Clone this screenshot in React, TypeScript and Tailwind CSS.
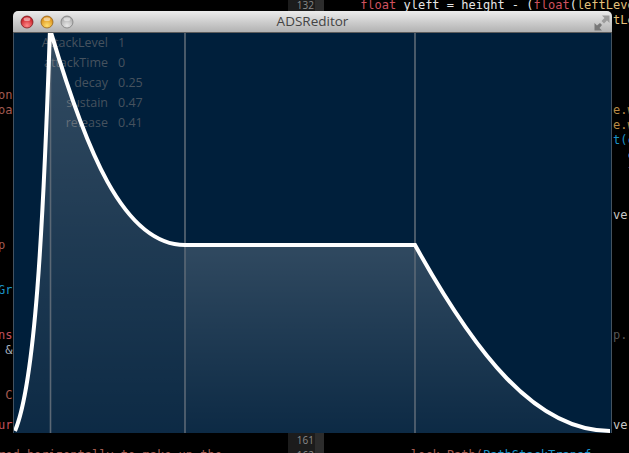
import React from "react";

const ui = "font-['Open_Sans',sans-serif]";
const LINES = 31;

type Line = { k: number; node: React.ReactNode };

const leftCode: Line[] = [
  { k: 6, node: <span className="text-[#a35a50]">on</span> },
  { k: 7, node: <span className="text-[#a35a50]">oa</span> },
  { k: 16, node: <span className="text-[#a35a50]">p</span> },
  { k: 19, node: <span className="text-[#1b93c8]">Gr</span> },
  { k: 22, node: <span className="text-[#c0505c]">ns</span> },
  { k: 23, node: <span className="text-[#a8b4c0]"> &amp;</span> },
  { k: 26, node: <span className="text-[#a35a50]"> C</span> },
  { k: 28, node: <span className="text-[#c0505c]">ur</span> },
  { k: 30, node: <span className="text-[#a35a50]">red horizontally to make up the</span> },
];

const pad = " ".repeat(40);
const rightCode: Line[] = [
  {
    k: 0,
    node: (
      <span className="text-[#e6e6e6]">
        {"     "}
        <span className="text-[#d0525f]">float</span> yleft = height - (<span className="text-[#d0525f]">float</span>(
        <span className="text-[#e5c07b]">leftLeve</span>
      </span>
    ),
  },
  { k: 1, node: <span className="text-[#e5c07b]">{pad}tLe</span> },
  { k: 7, node: <span className="text-[#b98a45]">{pad}e.w</span> },
  { k: 8, node: <span className="text-[#b98a45]">{pad}e.w</span> },
  { k: 9, node: <span className="text-[#1b93c8]">{pad}t(c</span> },
  { k: 10, node: <span className="text-[#d0d0d0]">{pad}  c</span> },
  { k: 11, node: <span className="text-[#d0525f]">{pad}  f</span> },
  { k: 14, node: <span className="text-[#c8c8c8]">{pad}ve,</span> },
  { k: 22, node: <span className="text-[#555555]">{pad}p.</span> },
  { k: 28, node: <span className="text-[#c8c8c8]">{pad}ve,</span> },
  {
    k: 30,
    node: (
      <span className="text-[#a35a50]">
        {" ".repeat(12)}lock Path(<span className="text-[#1b93c8]">PathStackTransf</span>
      </span>
    ),
  },
];

function CodePane({ lines, className }: { lines: Line[]; className: string }) {
  return (
    <div className={`flex flex-col overflow-hidden font-['DejaVu_Sans_Mono',monospace] text-[12px] leading-[15px] whitespace-pre ${className}`}>
      {Array.from({ length: LINES }, (_, i) => (
        <div key={i} className="h-[15px] shrink-0">
          {lines.find((l) => l.k === i)?.node}
        </div>
      ))}
    </div>
  );
}

function Light({ from, to, edge }: { from: string; to: string; edge: string }) {
  return (
    <svg width="14" height="14" viewBox="0 0 14 14" className="block">
      <defs>
        <radialGradient id={`l${edge}`} cx="50%" cy="80%" r="70%">
          <stop offset="0%" stopColor={to} />
          <stop offset="100%" stopColor={from} />
        </radialGradient>
      </defs>
      <circle cx="7" cy="7" r="6" fill={`url(#l${edge})`} stroke={edge} strokeWidth="0.8" />
      <ellipse cx="7" cy="4.2" rx="3.4" ry="1.9" fill="#ffffff" opacity="0.5" />
    </svg>
  );
}

const params: [string, string][] = [
  ["AttackLevel", "1"],
  ["attackTime", "0"],
  ["decay", "0.25"],
  ["sustain", "0.47"],
  ["release", "0.41"],
];

const CURVE =
  "M2 398 C 22 350, 30 200, 37 -4 C 72 115, 110 212, 172 212 L 402 212 C 462 320, 522 398, 597 398";

export default function App() {
  return (
    <div className="relative w-[629px] h-[453px] bg-black overflow-hidden">
      {/* code editor behind the window */}
      <div className="flex h-full">
        <CodePane lines={leftCode} className="w-[288px] shrink-0 -mt-[2px] -ml-[2px]" />
        <div className="w-[36px] ml-[2px] shrink-0 flex overflow-hidden">
          <div className={`w-[27px] bg-[#1c1c1c] flex flex-col items-end pr-[1px] ${ui} text-[10px] leading-[15px] text-[#8a8a8a]`}>
            <div className="-mt-[2px] flex flex-col">
              {Array.from({ length: LINES }, (_, i) => (
                <span key={i} className="h-[15px] shrink-0">
                  {132 + i}
                </span>
              ))}
            </div>
          </div>
          <div className="w-[9px] bg-[#2c2c2c]" />
        </div>
        <CodePane lines={rightCode} className="flex-1 -mt-[2px]" />
      </div>

      {/* window */}
      <div className="absolute left-[13px] top-[11px] w-[599px] h-[422px] flex flex-col">
        <div className="h-[22px] shrink-0 rounded-t-[5px] bg-gradient-to-b from-[#ececec] to-[#b2b2b2] border-b border-[#5c5c5c] grid grid-cols-[1fr_auto_1fr] items-center px-[2px]">
          <div className="flex gap-[6px] ml-[5px]">
            <Light from="#c4141c" to="#ff8a8a" edge="#7c1a1e" />
            <Light from="#d98a10" to="#ffdf70" edge="#94651a" />
            <Light from="#a8a8a8" to="#e8e8e8" edge="#7e7e7e" />
          </div>
          <span className={`${ui} text-[13.5px] leading-none text-[#444444]`}>ADSReditor</span>
          <svg width="16" height="16" viewBox="0 0 16 16" className="justify-self-end mt-[2px]">
            <path d="M15.5 0.5 L8 0.5 L10.5 3 L7.5 6 L10 8.5 L13 5.5 L15.5 8 Z" fill="#9c9c9c" />
            <path d="M0.5 15.5 L8 15.5 L5.5 13 L8 10 L6 8 L3 10.5 L0.5 8 Z" fill="#787878" />
          </svg>
        </div>

        <div className="relative flex-1 bg-[#001f3b] border-x border-[#44525f]">
          <div className={`grid grid-cols-[auto_auto] justify-start gap-x-[10px] pl-[20px] ${ui} text-[12.5px] leading-[20px] text-[#46525e]`}>
            {params.map(([k, v]) => (
              <React.Fragment key={k}>
                <span className="text-right w-[74px]">{k}</span>
                <span>{v}</span>
              </React.Fragment>
            ))}
          </div>

          <svg width="597" height="400" viewBox="1 0 597 400" className="absolute left-0 top-0 block">
            <defs>
              <linearGradient id="g1" gradientUnits="userSpaceOnUse" x1="0" y1="0" x2="0" y2="400">
                <stop offset="0%" stopColor="#ffffff" stopOpacity="0.2" />
                <stop offset="100%" stopColor="#ffffff" stopOpacity="0.05" />
              </linearGradient>
              <linearGradient id="g2" gradientUnits="userSpaceOnUse" x1="0" y1="212" x2="0" y2="400">
                <stop offset="0%" stopColor="#ffffff" stopOpacity="0.19" />
                <stop offset="100%" stopColor="#ffffff" stopOpacity="0.05" />
              </linearGradient>
            </defs>
            <path d="M2 398 C 22 350, 30 200, 37 -4 L 37 400 L 2 400 Z" fill="url(#g1)" />
            <path d="M37 -4 C 72 115, 110 212, 172 212 L 172 400 L 37 400 Z" fill="url(#g1)" />
            <rect x="172" y="212" width="230" height="188" fill="url(#g2)" />
            <path d="M402 212 C 462 320, 522 398, 597 398 L 597 400 L 402 400 Z" fill="url(#g2)" />
            <path d="M37.5 0V400M172 0V400M402 0V400" stroke="#5b6875" strokeWidth="1.6" fill="none" />
            <path d={CURVE} stroke="#ffffff" strokeWidth="4" fill="none" />
          </svg>
        </div>
      </div>
    </div>
  );
}
